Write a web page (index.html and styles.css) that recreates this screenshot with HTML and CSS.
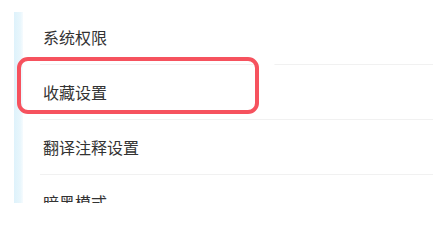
FILE: index.html
```html
<!DOCTYPE html>
<html lang="zh-CN">
<head>
<meta charset="utf-8">
<title>设置</title>
<link rel="stylesheet" href="styles.css">
</head>
<body>
<div class="page">
  <div class="strip"></div>
  <ul class="list">
    <li class="row"><span class="label">系统权限</span></li>
    <li class="row"><span class="label">收藏设置</span></li>
    <li class="row"><span class="label">翻译注释设置</span></li>
    <li class="row"><span class="label">暗黑模式</span></li>
    <li class="highlight"></li>
  </ul>
</div>
</body>
</html>
```

FILE: styles.css
```css
html, body {
  margin: 0;
  padding: 0;
  background: #ffffff;
}
.page {
  display: flex;
  padding-left: 14px;
  padding-top: 10px;
  height: 203px;
  overflow: hidden;
  box-sizing: border-box;
}
.strip {
  width: 9px;
  margin-top: 2px;
  background: linear-gradient(to right, #def2fb, #e8f6fc 70%, #f6fbfe);
  flex: none;
}
.list {
  position: relative;
  flex: 1;
  list-style: none;
  margin: 0;
  padding: 0;
}
.row {
  height: 55px;
  box-sizing: border-box;
  margin-left: 17px;
  padding-left: 3px;
  border-bottom: 1px solid #f1f1f1;
  display: flex;
  align-items: center;
  font-family: "Noto Sans CJK SC", "Noto Sans", sans-serif;
  font-size: 16px;
  color: #333333;
}
.highlight {
  position: absolute;
  left: -6px;
  top: 47px;
  width: 242px;
  height: 57px;
  box-sizing: border-box;
  border: 4px solid #f6525e;
  border-radius: 11px;
  box-shadow: 16px 0 0 0 #ffffff;
}
```
